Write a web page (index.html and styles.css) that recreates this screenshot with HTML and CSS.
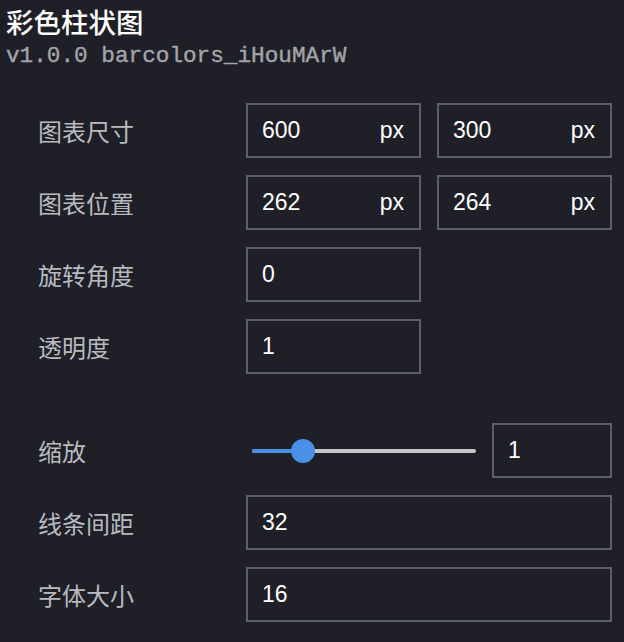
FILE: index.html
```html
<!DOCTYPE html>
<html lang="zh">
<head>
<meta charset="utf-8">
<title>彩色柱状图</title>
<link rel="stylesheet" href="styles.css">
</head>
<body>
<div class="panel">
  <header class="head">
    <h1 class="title">彩色柱状图</h1>
    <div class="ver">v1.0.0 barcolors_iHouMArW</div>
  </header>
  <div class="form">
    <div class="row">
      <div class="label">图表尺寸</div>
      <div class="field">
        <div class="box half"><span class="val">600</span><span class="unit">px</span></div>
        <div class="box half"><span class="val">300</span><span class="unit">px</span></div>
      </div>
    </div>
    <div class="row">
      <div class="label">图表位置</div>
      <div class="field">
        <div class="box half"><span class="val">262</span><span class="unit">px</span></div>
        <div class="box half"><span class="val">264</span><span class="unit">px</span></div>
      </div>
    </div>
    <div class="row">
      <div class="label">旋转角度</div>
      <div class="field">
        <div class="box half"><span class="val">0</span></div>
      </div>
    </div>
    <div class="row">
      <div class="label">透明度</div>
      <div class="field">
        <div class="box half"><span class="val">1</span></div>
      </div>
    </div>
    <div class="row row-gap">
      <div class="label">缩放</div>
      <div class="field">
        <div class="slider">
          <div class="track">
            <div class="fill" style="width: 22.8%"></div>
            <div class="thumb" style="left: 22.8%"></div>
          </div>
        </div>
        <div class="box small"><span class="val">1</span></div>
      </div>
    </div>
    <div class="row">
      <div class="label">线条间距</div>
      <div class="field">
        <div class="box full"><span class="val">32</span></div>
      </div>
    </div>
    <div class="row">
      <div class="label">字体大小</div>
      <div class="field">
        <div class="box full"><span class="val">16</span></div>
      </div>
    </div>
  </div>
</div>
</body>
</html>
```

FILE: styles.css
```css
html, body {
  margin: 0;
  padding: 0;
  background: #1e1f27;
}
body {
  width: 624px;
  height: 642px;
  overflow: hidden;
  font-family: "Liberation Sans", "Noto Sans CJK SC", sans-serif;
}
.panel {
  padding: 0 12px 0 6px;
}
.head {
  padding-top: 4px;
}
.title {
  margin: 0;
  font-family: "Noto Sans CJK SC", sans-serif;
  font-size: 27.5px;
  line-height: 34px;
  font-weight: 500;
  color: #ffffff;
}
.ver {
  font-family: "Liberation Mono", monospace;
  font-size: 22.7px;
  line-height: 36px;
  font-weight: normal;
  color: #a3a4a9;
  white-space: pre;
  -webkit-text-stroke: 0.4px #a3a4a9;
}
.form {
  margin-top: 29px;
  padding-left: 32px;
}
.row {
  display: flex;
  align-items: center;
  height: 55px;
  margin-bottom: 17px;
}
.row-gap {
  margin-top: 49px;
}
.label {
  width: 208px;
  flex: none;
  font-family: "Noto Sans CJK SC", sans-serif;
  font-size: 24px;
  color: #b9babf;
}
.field {
  display: flex;
  align-items: center;
  gap: 16px;
  flex: 1;
  height: 55px;
}
.box {
  box-sizing: border-box;
  height: 55px;
  border: 2px solid #5e6068;
  display: flex;
  align-items: center;
  justify-content: space-between;
  padding: 0 15px 0 14px;
  color: #ffffff;
  font-size: 23px;
}
.half {
  width: 175px;
}
.small {
  width: 120px;
}
.full {
  width: 366px;
}
.slider {
  width: 224px;
  padding-left: 6px;
  box-sizing: content-box;
}
.track {
  position: relative;
  height: 4px;
  background: #c4c5c9;
  border-radius: 2px;
}
.fill {
  height: 100%;
  background: #4a90e2;
  border-radius: 2px;
}
.thumb {
  position: absolute;
  top: 50%;
  width: 24px;
  height: 24px;
  margin: -12px 0 0 -12px;
  border-radius: 50%;
  background: #4a90e8;
}
```
